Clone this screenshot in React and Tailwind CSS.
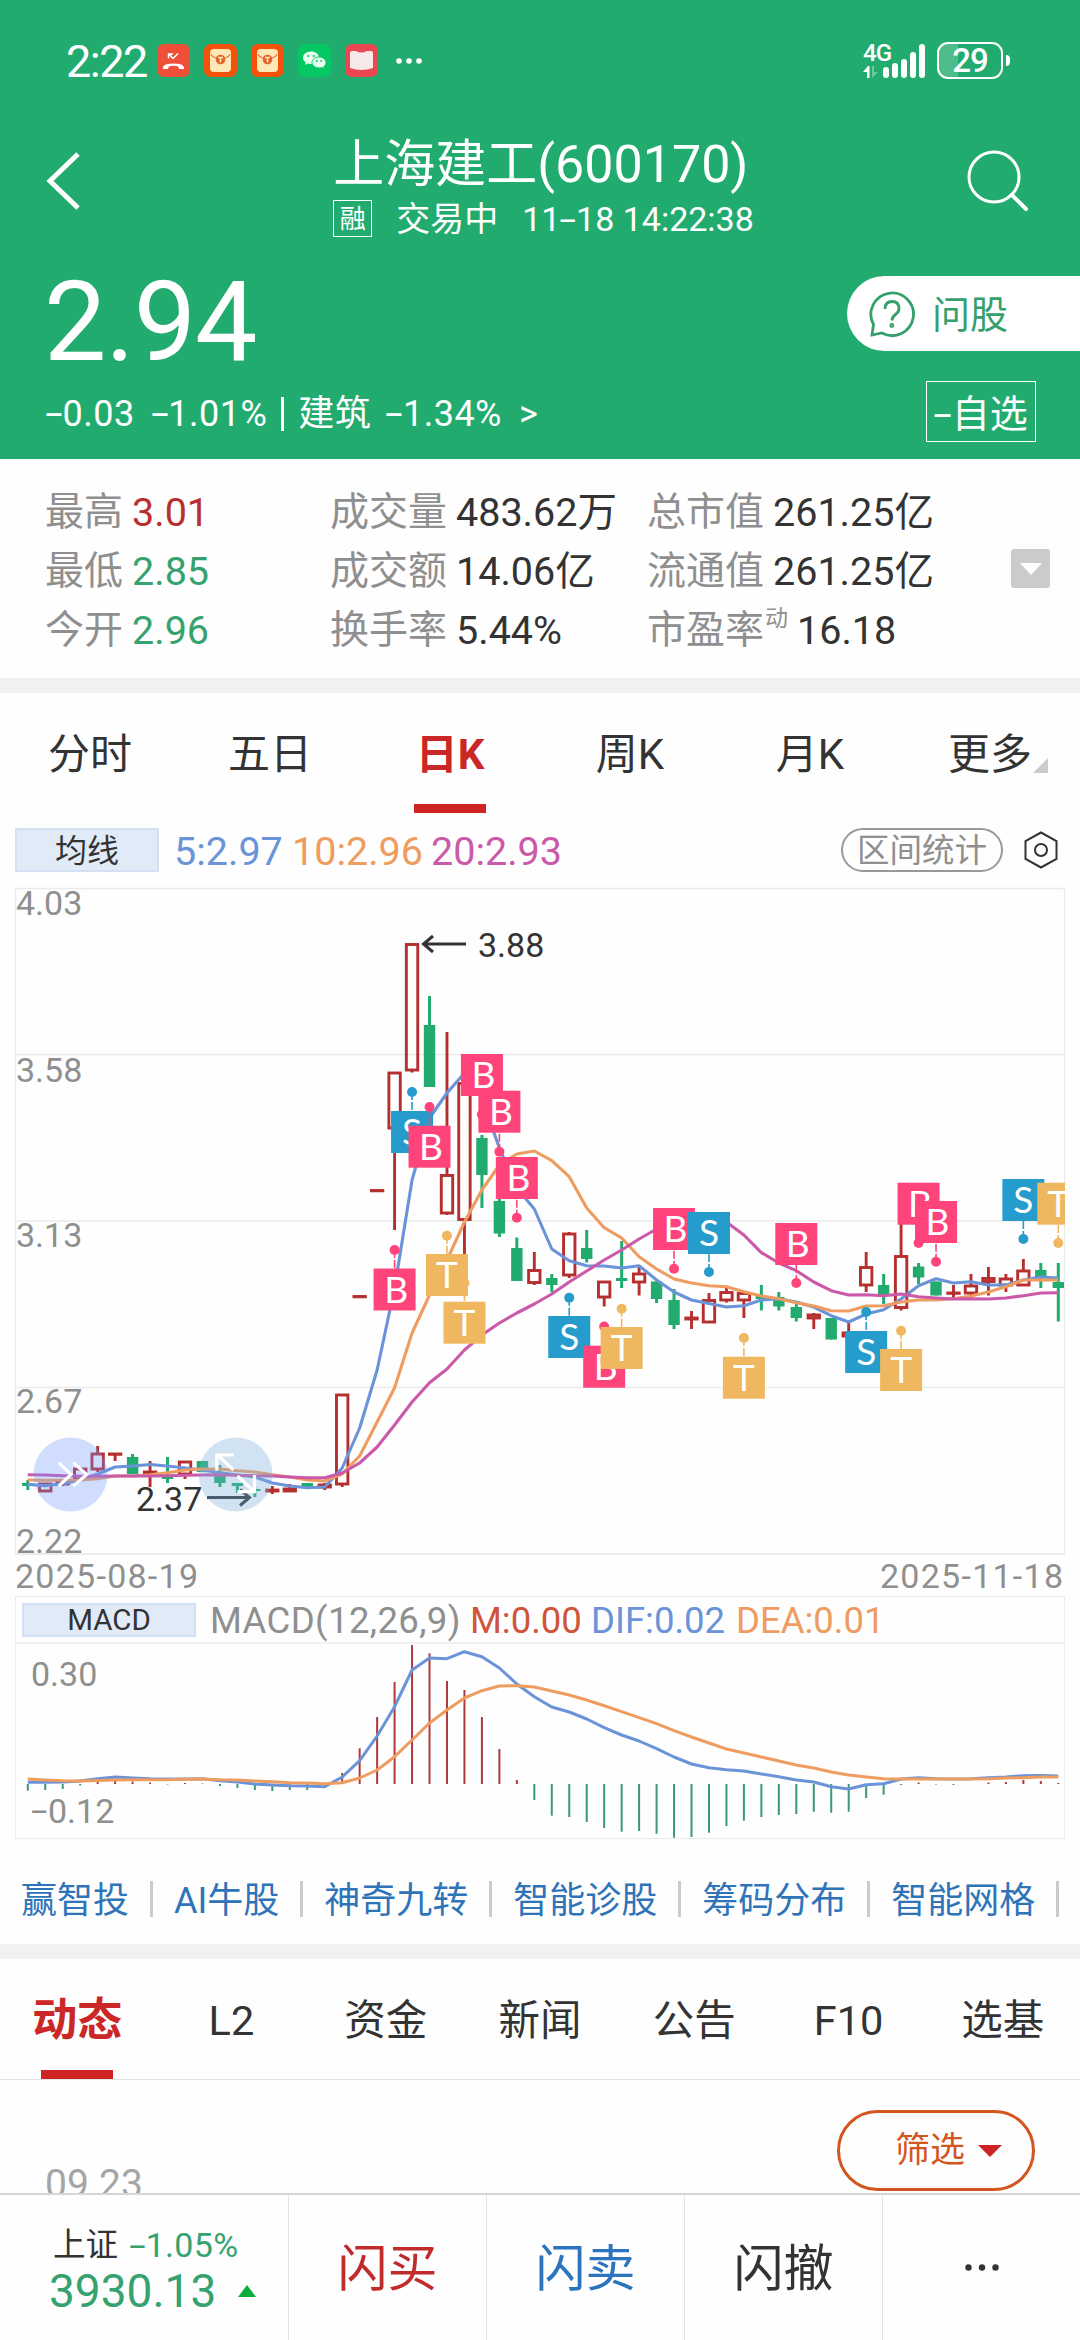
import { useState } from 'react';
import clsx from 'clsx';

// x position of the n-th trading day, shared by both charts
const STEP = 17.466;
const xAt = (i) => 27.8 + i * STEP;

const RED = '#b52f2f';
const GREEN = '#22ab6e';

// [direction, high, body top, body bottom, low]
const CANDLES = [
  ['d', 1480, 1483, 1486, 1490],
  ['u', 1483, 1483, 1491, 1491],
  ['u', 1479, 1481, 1484, 1486],
  ['u', 1468, 1468, 1479, 1479],
  ['u', 1446, 1453, 1469, 1472],
  ['u', 1453, 1453, 1454, 1461],
  ['d', 1454, 1457, 1474, 1474],
  ['u', 1461, 1471, 1473, 1487],
  ['d', 1457, 1477, 1479, 1483],
  ['u', 1461, 1461, 1474, 1479],
  ['d', 1461, 1461, 1472, 1472],
  ['d', 1465, 1472, 1483, 1487],
  ['d', 1483, 1483, 1486, 1493],
  ['d', 1487, 1489, 1491, 1497],
  ['u', 1486, 1489, 1491, 1494],
  ['u', 1484, 1488, 1491, 1491],
  ['d', 1483, 1483, 1487, 1489],
  ['u', 1483, 1484, 1487, 1490],
  ['u', 1394, 1394, 1484, 1487],
  ['u', 1296, 1295.5, 1296.5, 1296],
  ['u', 1190, 1189.5, 1190.5, 1190],
  ['u', 1072, 1072, 1128, 1230],
  ['u', 943, 943.5, 1070, 1072.5],
  ['d', 996, 1025, 1087, 1087],
  ['u', 1032, 1174.5, 1213, 1215],
  ['u', 1054, 1082.5, 1219.5, 1262],
  ['d', 1135, 1138, 1175, 1208],
  ['d', 1198, 1201, 1233.5, 1237],
  ['d', 1237.5, 1248, 1281, 1281],
  ['u', 1252, 1269.5, 1282.5, 1285],
  ['d', 1274, 1278, 1285, 1292],
  ['u', 1232, 1233, 1275, 1278],
  ['d', 1230, 1248, 1259, 1262.5],
  ['u', 1281, 1281, 1297, 1306.5],
  ['d', 1241, 1278, 1281, 1288],
  ['u', 1267, 1273, 1282, 1295.5],
  ['d', 1281.5, 1281.5, 1299, 1303],
  ['d', 1289, 1300, 1325, 1329],
  ['u', 1311, 1317, 1319, 1329],
  ['u', 1293, 1299.5, 1322, 1322],
  ['u', 1288, 1291.5, 1300, 1302.5],
  ['u', 1292, 1292.5, 1300, 1318],
  ['d', 1285, 1296, 1299, 1310.5],
  ['d', 1292, 1297, 1306.5, 1310.5],
  ['d', 1304, 1307, 1318, 1321.5],
  ['u', 1313, 1314, 1318, 1329],
  ['d', 1318, 1318, 1339.5, 1339.5],
  ['u', 1321.5, 1332, 1336, 1336],
  ['u', 1252, 1266.5, 1285, 1292],
  ['d', 1274, 1285, 1294, 1304],
  ['u', 1220, 1255.5, 1307.5, 1310.5],
  ['d', 1263, 1266.5, 1277.5, 1284],
  ['d', 1281.5, 1281.5, 1295.5, 1295.5],
  ['u', 1285, 1292, 1293, 1299],
  ['u', 1274, 1285, 1293, 1295.5],
  ['u', 1267, 1277.5, 1281.5, 1295.5],
  ['u', 1274, 1278, 1285, 1292],
  ['u', 1259, 1270, 1285, 1285],
  ['d', 1263, 1270, 1277, 1288],
  ['d', 1263, 1282, 1288, 1321.5],
];

const MA5 = [
  1484.5, 1485.7, 1483.7, 1480, 1474, 1467, 1466, 1464.5, 1466, 1468, 1470, 1472.7, 1475, 1477, 1483,
  1486, 1487.7, 1487, 1468, 1428, 1370, 1288, 1180, 1118, 1093, 1073, 1099, 1148, 1188, 1209,
  1249, 1260.7, 1265.7, 1266, 1268, 1265.7, 1280, 1292, 1300, 1303.5, 1307, 1305.7, 1300, 1298.7, 1302,
  1307, 1315.7, 1322, 1314, 1309.7, 1299, 1285.7, 1278.7, 1283, 1281.7, 1285, 1285, 1280, 1277, 1278,
];
const MA10 = [
  1480, 1480.3, 1480.3, 1480, 1478.7, 1476, 1476, 1474.7, 1472.7, 1470, 1469, 1469, 1470.7, 1472, 1474.7,
  1477, 1480, 1481, 1474, 1456, 1422, 1387.7, 1333, 1295, 1260, 1222, 1190, 1165, 1154, 1151,
  1160.7, 1176.7, 1208, 1227.7, 1238, 1256.7, 1269, 1279, 1283, 1285.7, 1286.7, 1291.7, 1296, 1298.7, 1302.7,
  1306, 1310.7, 1311, 1306, 1305.7, 1302, 1300, 1300, 1298.7, 1296, 1292, 1286.7, 1280, 1280, 1280,
];
const MA20 = [
  1474.7, 1475, 1475.7, 1476.3, 1476.3, 1476, 1476, 1476, 1475.7, 1475.3, 1475, 1474.7, 1475.3, 1475.7, 1476,
  1477, 1477.7, 1477.7, 1473, 1463, 1447, 1425, 1402, 1382.7, 1369, 1350, 1335, 1323, 1313, 1304,
  1294, 1282, 1271, 1260, 1250, 1239, 1229, 1222, 1218, 1217, 1222, 1235, 1252.7, 1263, 1270.7,
  1282, 1290.7, 1295, 1294.7, 1295.7, 1294, 1296.7, 1298, 1299, 1298.7, 1299, 1298, 1295.7, 1293, 1292.7,
];

// [day, letter, top of the tag, dot y]
const MARKS = [
  [21, 'B', 1268.5, 1250],
  [22, 'S', 1111, 1092],
  [23, 'B', 1125.7, 1107],
  [24, 'T', 1254, 1235.7],
  [25, 'T', 1301.7, 1283],
  [26, 'B', 1054, 1114.6],
  [27, 'B', 1090.7, 1151.7],
  [28, 'B', 1157, 1217.7],
  [31, 'S', 1316, 1297.7],
  [33, 'B', 1345.7, 1326.5],
  [34, 'T', 1327, 1308.7],
  [37, 'B', 1208, 1268.7],
  [39, 'S', 1212, 1272],
  [41, 'T', 1356.7, 1338],
  [44, 'B', 1223, 1283],
  [48, 'S', 1331, 1312],
  [50, 'T', 1349, 1330.7],
  [51, 'B', 1182.7, 1243],
  [52, 'B', 1201, 1261.7],
  [57, 'S', 1179, 1239],
  [59, 'T', 1182.7, 1243],
];
const MARK_COLORS = { B: '#fe447a', S: '#259ccb', T: '#efb860' };

// bar lengths around the zero line, negative goes up (red)
const MACD_BARS = [
  6.7, 6, 5, 1.5, -2, -3, -2.5, -1.5, 0.5, -1, -0.5, 2, 4, 6, 7,
  6, 6, 4, -11, -35.7, -67, -102, -139, -130.7, -103, -94, -67, -35, -4, 16,
  31.7, 33, 38, 44, 47.7, 47, 49.7, 53.7, 53, 48.7, 42, 36.7, 33, 31, 30,
  27.7, 28.7, 27.7, 14, 10.7, 1, -1.5, 0.5, 1, 0, -1.5, -2, -4, -3, -1,
];
const DIF = [
  1782.3, 1782.3, 1782, 1781, 1778.7, 1777, 1778, 1778.7, 1779, 1779, 1778.7, 1780.7, 1782, 1784, 1785,
  1785.7, 1786, 1786.7, 1777, 1760.7, 1736, 1706.7, 1670, 1658, 1658.7, 1651.7, 1656.7, 1668, 1684, 1696.7,
  1707, 1712, 1719, 1727.7, 1735, 1741, 1748.7, 1757, 1764, 1767.7, 1769.7, 1771, 1774, 1776.7, 1780,
  1782, 1786.7, 1789, 1784.7, 1783.7, 1779, 1777.7, 1778.7, 1779, 1778.7, 1777.7, 1777, 1775.7, 1775.5, 1776,
];
const DEA = [
  1779, 1780, 1780.7, 1781, 1780.5, 1780, 1779.7, 1779.7, 1779.7, 1779.3, 1779, 1779.7, 1780, 1781, 1781.7,
  1782.7, 1783, 1783.7, 1782.7, 1778, 1770, 1756.7, 1740, 1723, 1710, 1698, 1690.7, 1686, 1685.7, 1687,
  1691, 1695, 1700, 1705.7, 1711.7, 1717.7, 1723.7, 1730.7, 1737, 1743, 1749, 1753, 1757, 1761, 1765,
  1768, 1772, 1775, 1777, 1778.7, 1779, 1779, 1779, 1779, 1779, 1778.7, 1778, 1777.7, 1777, 1777,
];

const STATS = [
  [
    { label: '最高', value: '3.01', color: 'text-[#b82f2f]' },
    { label: '最低', value: '2.85', color: 'text-[#35a26f]' },
    { label: '今开', value: '2.96', color: 'text-[#35a26f]' },
  ],
  [
    { label: '成交量', value: '483.62万' },
    { label: '成交额', value: '14.06亿' },
    { label: '换手率', value: '5.44%' },
  ],
  [
    { label: '总市值', value: '261.25亿' },
    { label: '流通值', value: '261.25亿' },
    { label: '市盈率', sup: '动', value: '16.18' },
  ],
];

const toPoints = (values) => values.map((y, i) => `${xAt(i)},${y}`).join(' ');

function Num({ children }) {
  return children.split(/(-)/).map((part, i) =>
    part === '-' ? (
      <span key={i} className="inline-block w-[0.46em] scale-x-[1.75] text-center">-</span>
    ) : (
      part
    )
  );
}

/* ── Status bar ── */
function EnvelopeApp() {
  return (
    <svg width="33" height="33" viewBox="0 0 33 33">
      <rect width="33" height="33" rx="7" fill="#f4520b" />
      <rect x="6" y="5" width="21" height="23" rx="4" fill="#ffe6b5" />
      <path d="M7 10.5C11 16 22 16 26 10.5" fill="none" stroke="#e4672a" strokeWidth="1.2" />
      <circle cx="16.5" cy="15.5" r="4.8" fill="#e0632a" />
      <path d="M14 13.5h5M16.5 13.5v5" stroke="#ffe6b5" strokeWidth="1.5" />
    </svg>
  );
}

function StatusBar() {
  return (
    <div className="flex h-[121px] items-center pl-[66px] pr-[70px]">
      <span className="w-[91px] pt-[2px] text-[45px] leading-none tracking-[-1.5px]">2:22</span>
      <div className="flex gap-[14px]">
        <svg width="33" height="33" viewBox="0 0 33 33">
          <rect width="33" height="33" rx="7" fill="#ef4f37" />
          <path d="M6 25c-.5-2.5 1-5.5 10.5-5.5S27.5 22.5 27 25h-5l-.8-2.6c-3-.9-6.4-.9-9.4 0L11 25z" fill="#fff" />
          <path d="M21 9.5l-5 5-4-4.5M11.5 14.5V10H16" fill="none" stroke="#fff" strokeWidth="1.5" />
        </svg>
        <EnvelopeApp />
        <EnvelopeApp />
        <svg width="33" height="33" viewBox="0 0 33 33">
          <rect width="33" height="33" rx="7" fill="#05c864" />
          <path d="M13 7.5c-4.5 0-8 2.8-8 6.3 0 2 1.1 3.7 2.900 4.800L7.200 21l2.700-1.400c1 .3 2 .4 3.100.4 4.500 0 8-2.800 8-6.300s-3.500-6.200-8-6.200z" fill="#e9fff2" />
          <path d="M21 13c3.900 0 7 2.500 7 5.600 0 1.700-.9 3.100-2.300 4.100l.5 2-2.300-1.100c-.9.300-1.900.4-2.900.4-3.900 0-7-2.400-7-5.400s3.100-5.600 7-5.600z" fill="#e9fff2" stroke="#05c864" />
          <g fill="#05c864">
            <circle cx="10.3" cy="12" r="1.1" />
            <circle cx="15.7" cy="12" r="1.1" />
            <circle cx="18.8" cy="17" r="1" />
            <circle cx="23.2" cy="17" r="1" />
          </g>
        </svg>
        <svg width="33" height="33" viewBox="0 0 33 33">
          <rect width="33" height="33" rx="7" fill="#ea4750" />
          <path d="M5 9q0-2 2-2h4q5 3 11 0h4q2 0 2 2v15q-11.500 4-23 0z" fill="#f6e9ea" />
        </svg>
      </div>
      <svg className="ml-[18px]" width="28" height="6" viewBox="0 0 28 6" fill="#fff">
        <circle cx="3" cy="3" r="2.8" />
        <circle cx="13" cy="3" r="2.8" />
        <circle cx="23" cy="3" r="2.8" />
      </svg>
      <div className="ml-auto flex items-center">
        <div className="flex h-[36px] w-[20px] flex-col justify-between">
          <span className="text-[24px] font-medium leading-[20px] tracking-[-1px]">4G</span>
          <svg width="16" height="13" viewBox="0 0 16 13">
            <path d="M0 6l5-6h1.5v12H4V6z" fill="#fff" />
            <path d="M9 0h2v6h4l-6 6z" fill="#fff" opacity="0.35" />
          </svg>
        </div>
        <div className="flex h-[35px] items-end gap-[3px]">
          <i className="h-[11px] w-[6px] rounded-full bg-white" />
          <i className="h-[15px] w-[6px] rounded-full bg-white" />
          <i className="h-[19px] w-[6px] rounded-full bg-white" />
          <i className="h-[26px] w-[6px] rounded-full bg-white" />
          <i className="h-[34px] w-[6px] rounded-full bg-white" />
        </div>
        <div className="ml-[12px] flex h-[37px] w-[66px] items-center justify-center overflow-hidden rounded-[11px] border-[2.5px] border-white bg-linear-to-r from-white/20 from-30% to-transparent to-30% text-[33px] font-medium leading-none tracking-[-1px]">
          29
        </div>
        <i className="ml-[3px] h-[11px] w-[4px] rounded-r bg-white" />
      </div>
    </div>
  );
}

function Header() {
  return (
    <header className="h-[459px] shrink-0 bg-[#22ab6e] text-white">
      <StatusBar />
      <div className="flex h-[133px] items-start justify-between pl-[46px] pr-[50px]">
        <svg className="mt-[30px]" width="36" height="60" viewBox="0 0 36 60">
          <path d="M32 3L4 30l28 27" fill="none" stroke="#fff" strokeWidth="5" />
        </svg>
        <div className="ml-[41px] pt-[16px]">
          <h1 className="flex items-center text-[51px] leading-[56px]">
            上海建工<span className="text-[52px]">(600170)</span>
          </h1>
          <div className="mt-[7px] flex items-center text-[34px] leading-none">
            <span className="flex h-[37px] w-[39px] items-center justify-center border border-white pt-[1px] text-[26px]">融</span>
            <span className="ml-[24px]">交易中</span>
            <span className="ml-[24px] whitespace-pre"><Num>11-18 14:22:38</Num></span>
          </div>
        </div>
        <svg className="mt-[28px]" width="66" height="66" viewBox="0 0 66 66" fill="none" stroke="#fff" strokeLinecap="round">
          <circle cx="30" cy="28" r="25" strokeWidth="3" />
          <path d="M48 46l14 14" strokeWidth="4" />
        </svg>
      </div>
      <div className="flex h-[110px] items-start justify-between pl-[44px] pt-[10px]">
        <span className="text-[111px] leading-[116px] tracking-[-1px]">2.94</span>
        <button className="mt-[12px] flex h-[75px] w-[233px] items-center rounded-l-full bg-white pl-[21px] text-[38px] leading-none text-[#35a06c]">
          <svg width="48" height="48" viewBox="0 0 48 48" fill="none" stroke="#35a06c" strokeWidth="2.8">
            <path d="M5.5 34.5A21.3 21.3 0 1 1 14 43l-10 2z" />
            <path d="M17 19q0-7.500 7-7.500t7 7q0 3.500-3.500 6-3.500 2.500-3.500 6" />
            <circle cx="23.8" cy="35.5" r="1" />
          </svg>
          <span className="ml-[16px] pt-[3px]">问股</span>
        </button>
      </div>
      <div className="flex h-[95px] items-center justify-between pl-[46px] pr-[44px] text-[36px] leading-none">
        <div className="flex items-center whitespace-pre pt-[4px] tracking-[0.5px]">
          <span><Num>-0.03</Num></span>
          <span className="ml-[17px]"><Num>-1.01%</Num></span>
          <i className="mx-[14px] h-[34px] w-[3px] bg-white" />
          <span>建筑</span>
          <span className="ml-[15px]"><Num>-1.34%</Num></span>
          <span className="ml-[17px]">&gt;</span>
        </div>
        <button className="flex h-[61px] w-[110px] items-center justify-center border border-white pt-[4px] text-[38px] leading-none">
          <Num>-自选</Num>
        </button>
      </div>
    </header>
  );
}

function Stats() {
  return (
    <section className="flex h-[219px] shrink-0 items-center pl-[45px] text-[39.5px] leading-[59px] text-[#333]">
      {STATS.map((col, c) => (
        <div key={c} className={clsx('pt-[5px]', c === 0 && 'w-[285px]', c === 1 && 'w-[317px]', c === 2 && 'w-[364px]')}>
          {col.map(({ label, sup, value, color }) => (
            <div key={label} className="flex h-[59px] items-center whitespace-nowrap">
              <span className="text-[39px] text-[#8f8f8f]">{label}</span>
              {sup && <span className="mb-[24px] ml-[1px] text-[23px] text-[#8f8f8f]">{sup}</span>}
              <span className={clsx('ml-[9px]', color)}>{value}</span>
            </div>
          ))}
        </div>
      ))}
      <button className="flex h-[39px] w-[39px] items-center justify-center rounded-[3px] bg-[#cbcbcb]">
        <svg width="22" height="12" viewBox="0 0 22 12"><path d="M0 0h22L11 12z" fill="#fff" /></svg>
      </button>
    </section>
  );
}

function PeriodTabs() {
  const [active, setActive] = useState('日K');
  return (
    <nav className="grid h-[120px] shrink-0 grid-cols-6 text-[42px] leading-none text-[#333]">
      {['分时', '五日', '日K', '周K', '月K', '更多'].map((tab) => (
        <button
          key={tab}
          onClick={() => setActive(tab)}
          className={clsx('flex flex-col items-center justify-end', active === tab && 'font-bold text-[#cc2727]')}
        >
          <span className="mb-[28px] flex items-end">
            {tab}
            {tab === '更多' && (
              <svg className="-mr-[16px] mb-[3px] ml-[1px]" width="15" height="15" viewBox="0 0 15 15"><path d="M15 0v15H0z" fill="#cbcbcb" /></svg>
            )}
          </span>
          <i className={clsx('h-[9px] w-[72px]', active === tab && 'bg-[#cf2323]')} />
        </button>
      ))}
    </nav>
  );
}

function AverageRow() {
  return (
    <div className="mt-[15px] flex h-[44px] shrink-0 items-center pl-[15px] text-[39.5px] leading-none">
      <button className="mr-[15px] flex h-[44px] w-[144px] items-center justify-center border-2 border-[#d3dff3] bg-[#e1ebf8] pt-[2px] text-[32px] text-[#333]">
        均线
      </button>
      <span className="w-[118px] pt-[4px] text-[#6a93d8]">5:2.97</span>
      <span className="w-[139px] pt-[4px] text-[#ee9c60]">10:2.96</span>
      <span className="pt-[4px] text-[#cb59a9]">20:2.93</span>
      <button className="ml-auto mr-[21px] flex h-[44px] w-[162px] items-center justify-center rounded-full border-2 border-[#999] pt-[2px] text-[32.5px] text-[#8f8f8f]">
        区间统计
      </button>
      <svg className="mr-[22px]" width="34" height="38" viewBox="0 0 34 38" fill="none" stroke="#333" strokeWidth="2">
        <path d="M17 1.5L32.500 10v18L17 36.500 1.500 28V10z" />
        <circle cx="17" cy="19" r="6" />
      </svg>
    </div>
  );
}

function Candle({ i, data }) {
  const [dir, high, top, bottom, low] = data;
  const x = xAt(i);
  if (dir === 'd') {
    return (
      <g fill={GREEN}>
        <rect x={x - 1.5} y={high} width="3" height={low - high} />
        <rect x={x - 5.7} y={top} width="11.4" height={bottom - top} />
      </g>
    );
  }
  return (
    <g stroke={RED} strokeWidth="2.9" fill="none">
      <path d={`M${x} ${high}V${top}M${x} ${bottom}V${low}`} />
      <rect x={x - 5.7} y={top + 1} width="11.4" height={Math.max(bottom - top - 1, 0.3)} />
    </g>
  );
}

function Mark({ data }) {
  const [i, letter, top, dot] = data;
  const x = xAt(i);
  const color = MARK_COLORS[letter];
  const edge = dot < top ? top : top + 42;
  return (
    <g>
      <line x1={x} x2={x} y1={dot} y2={edge} stroke={color} strokeWidth="1.6" strokeDasharray="8 2" />
      <circle cx={x} cy={dot} r="5" fill={color} />
      <rect x={x - 21} y={top} width="42" height="42" fill={color} />
      <text x={letter === 'B' ? x + 1.5 : x} y={top + 34} fill="#fff" fontSize="37" textAnchor="middle" className="font-['Lato']">
        {letter}
      </text>
    </g>
  );
}

function KLineChart() {
  return (
    <svg className="mt-[8px] block shrink-0" width="1080" height="716" viewBox="0 880 1080 716">
      <defs>
        <clipPath id="plot"><rect x="15" y="880" width="1050" height="680" /></clipPath>
      </defs>
      <g stroke="#ebebeb" strokeWidth="1.3">
        <path d="M15 888.5H1065M15 1054.5H1065M15 1221H1065M15 1387.5H1065" />
        <path d="M15.5 888V1554M1064.5 888V1554" />
        <path d="M15 1554H1065" strokeWidth="2" />
      </g>
      <g fill="#8f8f8f" fontSize="34">
        <text x="16" y="915">4.03</text>
        <text x="16" y="1081.5">3.58</text>
        <text x="16" y="1247">3.13</text>
        <text x="16" y="1413">2.67</text>
        <text x="16" y="1552.5">2.22</text>
        <text x="15" y="1587.5" textLength="183">2025-08-19</text>
        <text x="880" y="1587.5" textLength="183">2025-11-18</text>
      </g>
      <g clipPath="url(#plot)">
        {CANDLES.map((c, i) => <Candle key={i} i={i} data={c} />)}
        <g fill="none" strokeWidth="3.1" strokeLinejoin="round">
          <polyline points={toPoints(MA5)} stroke="#6a93d8" />
          <polyline points={toPoints(MA10)} stroke="#ee9c60" />
          <polyline points={toPoints(MA20)} stroke="#cb59a9" />
        </g>
        {MARKS.map((m) => <Mark key={m[0]} data={m} />)}
      </g>

      {/* highest and lowest price */}
      <g fill="none" stroke="#333" strokeWidth="3">
        <path d="M424 944h42M433 936l-9.500 8 9.500 8" />
        <path d="M207 1497.5h42M240 1489.5l9.500 8-9.500 8" />
      </g>
      <g fill="#333" fontSize="34">
        <text x="478" y="956.5">3.88</text>
        <text x="136" y="1511">2.37</text>
      </g>

      {/* floating collapse and full-screen buttons */}
      <circle cx="70.5" cy="1474.5" r="37" fill="#6f98ff" opacity="0.32" />
      <circle cx="235.7" cy="1474.5" r="37" fill="#7cafdc" opacity="0.34" />
      <g fill="none" stroke="#fff" strokeWidth="3.2">
        <path d="M58.7 1462.7l12.300 11.700-12.300 11.700M73.300 1462.700l13.400 11.700-13.400 11.700" />
        <path d="M217 1454.5l16.500 15.500M234 1455h-17.200v15.500M237.500 1476l16.500 15.500M237.500 1491.700h17V1475" />
      </g>
    </svg>
  );
}

function MacdChart() {
  return (
    <div className="mx-[15px] h-[243px] shrink-0 border border-[#ebebeb]">
      <div className="flex h-[47px] items-center whitespace-nowrap border-b-2 border-[#f0f0f0] pl-[6px] text-[36.5px] leading-none">
        <button className="mr-[14px] flex h-[34px] w-[174px] items-center justify-center border-2 border-[#d3dff3] bg-[#e1ebf8] pt-[2px] text-[29.5px] leading-none text-[#333]">
          MACD
        </button>
        <span className="w-[260px] pt-[3px] tracking-[0.4px] text-[#8f8f8f]">MACD(12,26,9)</span>
        <span className="w-[121px] pt-[3px] text-[#d0543a]">M:0.00</span>
        <span className="w-[145px] pt-[3px] text-[#6a93d8]">DIF:0.02</span>
        <span className="pt-[3px] text-[#ee9c60]">DEA:0.01</span>
      </div>
      <svg className="-ml-[1px] block" width="1050" height="194" viewBox="15 1644 1050 194">
        {MACD_BARS.map((h, i) => (
          <rect
            key={i}
            x={xAt(i) - 1}
            y={h < 0 ? 1784 + h : 1784}
            width="2"
            height={Math.abs(h)}
            fill={h < 0 ? '#b03a3a' : '#3a9a72'}
          />
        ))}
        <g fill="none" strokeWidth="3" strokeLinejoin="round">
          <polyline points={toPoints(DIF)} stroke="#6a93d8" />
          <polyline points={toPoints(DEA)} stroke="#ee9c60" />
        </g>
        <g fill="#8f8f8f" fontSize="34">
          <text x="31" y="1685.5">0.30</text>
          <text x="48" y="1822.5">0.12</text>
          <text x="20" y="1822.5" transform="translate(-4 0) scale(1.75 1)">-</text>
        </g>
      </svg>
    </div>
  );
}

function Tools() {
  return (
    <div className="flex h-[105px] shrink-0 items-center overflow-hidden whitespace-nowrap pl-[21px] pt-[15px] text-[36px] leading-none text-[#2f74b8]">
      {['赢智投', 'AI牛股', '神奇九转', '智能诊股', '筹码分布', '智能网格'].map((name) => (
        <div key={name} className="flex items-center">
          <span className="pt-[3px]">{name}</span>
          <i className="mx-[21px] h-[36px] w-[3px] bg-[#cbcbcb]" />
        </div>
      ))}
    </div>
  );
}

function InfoTabs() {
  const [active, setActive] = useState('动态');
  return (
    <nav className="grid h-[121px] shrink-0 grid-cols-7 border-b border-[#e3e3e3] text-[41.5px] leading-none text-[#333]">
      {['动态', 'L2', '资金', '新闻', '公告', 'F10', '选基'].map((tab) => (
        <button
          key={tab}
          onClick={() => setActive(tab)}
          className={clsx('flex flex-col items-center justify-end', active === tab && 'text-[45px] font-bold text-[#cc2727]')}
        >
          <span className="flex h-[80px] items-center pb-[19px]">{tab}</span>
          <i className={clsx('h-[9px] w-[72px]', active === tab && 'bg-[#cf2323]')} />
        </button>
      ))}
    </nav>
  );
}

function BottomBar() {
  return (
    <footer className="grid h-[147px] shrink-0 grid-cols-[288px_198px_198px_198px_198px] border-t-2 border-[#d5d7d6] text-[50px] leading-none text-[#333]">
      <div className="flex flex-col pl-[49px] pt-[32px]">
        <div className="flex items-center pl-[4px] text-[32.5px] leading-[36px]">
          上证<span className="ml-[12px] text-[34px] tracking-[0.3px] text-[#35a26f]"><Num>-1.05%</Num></span>
        </div>
        <div className="flex items-center text-[46px] leading-[56px] text-[#35a26f]">
          3930.13
          <svg className="ml-[22px]" width="18" height="12" viewBox="0 0 18 12"><path d="M9 0l9 12H0z" fill="#0cab3e" /></svg>
        </div>
      </div>
      <button className="flex items-center justify-center border-l border-[#e3e3e3] pt-[3px] text-[#c02b2b]">闪买</button>
      <button className="flex items-center justify-center border-l border-[#e3e3e3] pt-[3px] text-[#2c74bd]">闪卖</button>
      <button className="flex items-center justify-center border-l border-[#e3e3e3] pt-[3px]">闪撤</button>
      <button className="flex items-center justify-center border-l border-[#e3e3e3]">
        <svg width="34" height="7" viewBox="0 0 34 7" fill="#333">
          <circle cx="3.5" cy="3.5" r="3.2" />
          <circle cx="17" cy="3.5" r="3.2" />
          <circle cx="30.5" cy="3.5" r="3.2" />
        </svg>
      </button>
    </footer>
  );
}

export default function App() {
  return (
    <div className="flex h-[2340px] w-[1080px] flex-col overflow-hidden bg-[#fefefe] font-['Roboto','Noto_Sans_CJK_SC',sans-serif]">
      <Header />
      <Stats />
      <div className="h-[15px] shrink-0 bg-[#f1f1f1]" />
      <PeriodTabs />
      <AverageRow />
      <KLineChart />
      <MacdChart />
      <Tools />
      <div className="h-[15px] shrink-0 bg-[#f1f1f1]" />
      <InfoTabs />
      <section className="flex h-[113px] shrink-0 items-start justify-between overflow-hidden pl-[45px] pr-[45px] pt-[30px]">
        <span className="mt-[51px] text-[39px] leading-[46px] text-[#a5a5a5]">09.23</span>
        <button className="flex h-[81px] w-[198px] items-center rounded-full border-3 border-[#d2561f] pl-[55px] text-[35px] leading-none text-[#d2561f]">
          筛选
          <svg className="ml-[13px]" width="24" height="12" viewBox="0 0 24 12"><path d="M0 0h24L12 12z" fill="#cc2424" /></svg>
        </button>
      </section>
      <BottomBar />
    </div>
  );
}
